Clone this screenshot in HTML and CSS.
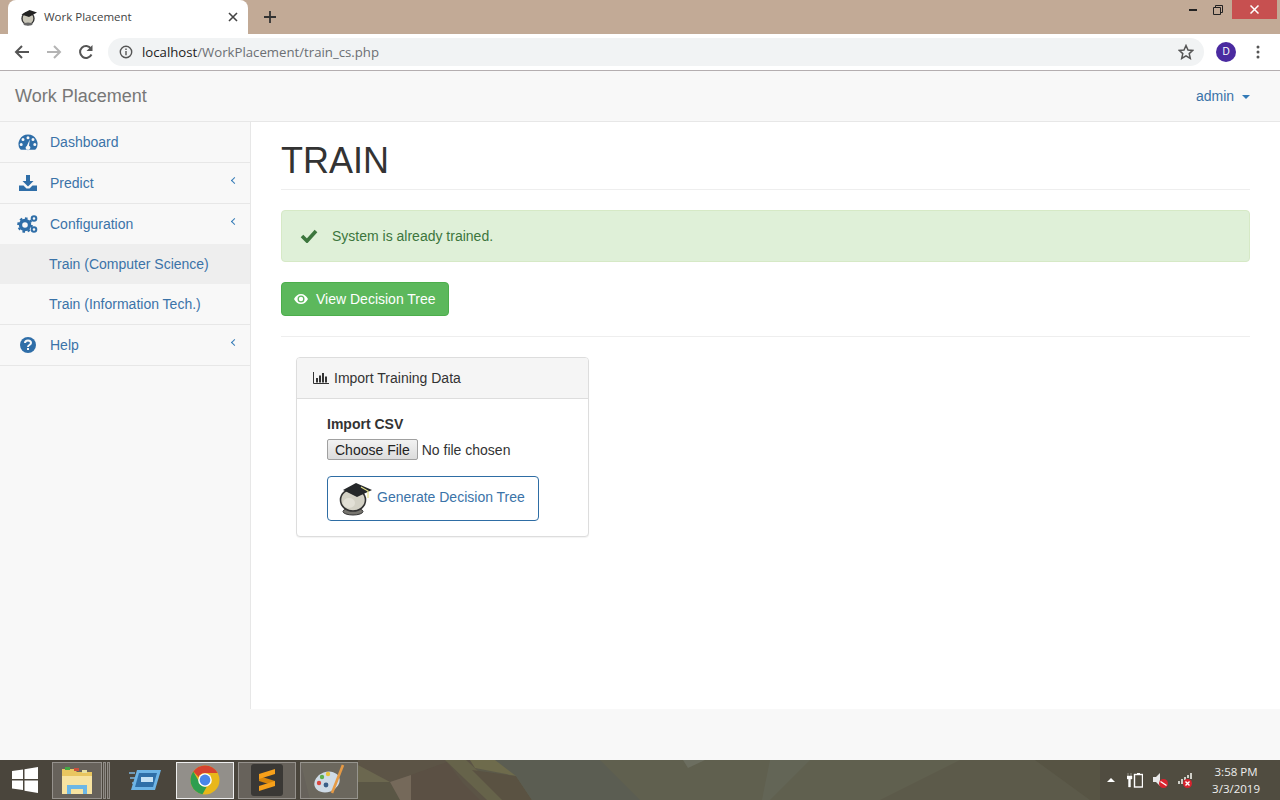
FILE: index.html
```html
<!DOCTYPE html>
<html lang="en">
<head>
    <meta charset="UTF-8">
    <meta name="viewport" content="width=device-width, initial-scale=1.0">
    <title>Work Placement</title>
    <link rel="stylesheet" href="styles.css">
</head>
<body>

<!-- browser window: tabs -->
<div class="tabstrip">
    <div class="tab">
        <svg class="tab-icon" width="18" height="18" viewBox="0 0 18 18">
            <ellipse cx="8" cy="10.5" rx="6" ry="6.2" fill="#c9c6b8" stroke="#333" stroke-width="1.4"/>
            <ellipse cx="8" cy="16" rx="4.5" ry="1.5" fill="#666"/>
            <polygon points="1.5,6.5 9.5,2 17,4.5 9,9" fill="#222"/>
        </svg>
        <span class="tab-title">Work Placement</span>
        <svg class="tab-close" width="10" height="10" viewBox="0 0 10 10"><path d="M1 1l8 8M9 1l-8 8" stroke="#444" stroke-width="1.6"/></svg>
    </div>
    <svg class="new-tab" width="12" height="12" viewBox="0 0 12 12"><path d="M6 0v12M0 6h12" stroke="#333" stroke-width="1.8"/></svg>
    <div class="window-btns">
        <svg width="8" height="2" viewBox="0 0 8 2"><rect width="8" height="2" fill="#222"/></svg>
        <svg class="win-restore" width="10" height="10" viewBox="0 0 10 10"><path d="M.5 2.5h7v7h-7zM2.5 2.5v-2h7v7h-2" fill="none" stroke="#222"/></svg>
        <div class="win-close"><svg width="9" height="9" viewBox="0 0 9 9"><path d="M.5.5l8 8M8.5.5l-8 8" stroke="#fff" stroke-width="1.5"/></svg></div>
    </div>
</div>

<!-- browser window: address bar -->
<div class="toolbar">
    <svg class="tool-btn" width="16" height="16" viewBox="0 0 16 16"><path d="M15 8H2M8 2L2 8l6 6" fill="none" stroke="#555" stroke-width="2"/></svg>
    <svg class="tool-btn" width="16" height="16" viewBox="0 0 16 16"><path d="M1 8h13M8 2l6 6-6 6" fill="none" stroke="#b4b4b4" stroke-width="2"/></svg>
    <svg class="tool-reload" width="16" height="16" viewBox="0 0 16 16"><path d="M13.5 10.5A6 6 0 1 1 13 4.5" fill="none" stroke="#555" stroke-width="2"/><polygon points="14.5,1 14.5,7 8.5,7" fill="#555"/></svg>
    <div class="omnibox">
        <svg width="14" height="14" viewBox="0 0 14 14"><circle cx="7" cy="7" r="5.7" fill="none" stroke="#555" stroke-width="1.4"/><path d="M7 6v4.2M7 3.6v1.4" stroke="#555" stroke-width="1.4"/></svg>
        <span class="url"><span class="url-host">localhost</span>/WorkPlacement/train_cs.php</span>
        <svg class="star" width="16" height="16" viewBox="0 0 16 16"><polygon points="8,1.5 10,6 14.8,6.4 11.2,9.6 12.3,14.4 8,11.8 3.7,14.4 4.8,9.6 1.2,6.4 6,6" fill="none" stroke="#555" stroke-width="1.5"/></svg>
    </div>
    <div class="avatar">D</div>
    <svg class="kebab" width="4" height="14" viewBox="0 0 4 14"><circle cx="2" cy="2" r="1.5" fill="#555"/><circle cx="2" cy="7" r="1.5" fill="#555"/><circle cx="2" cy="12" r="1.5" fill="#555"/></svg>
</div>

<!-- app -->
<nav class="navbar">
    <a class="brand">Work Placement</a>
    <a class="user-menu">admin <span class="caret"></span></a>
</nav>

<div class="wrapper">
    <aside class="sidebar">
        <ul class="side-nav">
            <li><a>
                <svg class="side-icon" width="20" height="18" viewBox="0 0 20 18"><path fill-rule="evenodd" d="M10 1.5a9.5 9.5 0 0 0-8 14.6c.3.5.7.7 1.200.7h13.600c.5 0 .9-.2 1.200-.7A9.500 9.500 0 0 0 10 1.500zM10 3.200a1.500 1.500 0 1 1 0 3 1.500 1.500 0 0 1 0-3zM5 5a1.500 1.500 0 1 1 0 3 1.500 1.500 0 0 1 0-3zM15 5a1.500 1.500 0 1 1 0 3 1.500 1.500 0 0 1 0-3zM3.200 10a1.500 1.500 0 1 1 0 3 1.500 1.500 0 0 1 0-3zM16.800 10a1.500 1.500 0 1 1 0 3 1.500 1.500 0 0 1 0-3zM11.800 6.500l-.8 6.300a2.200 2.200 0 1 1-2.200.1z" fill="#2f6ea8"/></svg>
                Dashboard</a></li>
            <li><a>
                <svg class="side-icon" width="20" height="18" viewBox="0 0 20 18"><path d="M8 1h4v6h3.500L10 12.500 4.500 7H8z" fill="#2f6ea8"/><path d="M1 11.500h4.500L8.500 14.500h3l3-3H19V17H1z" fill="#2f6ea8"/></svg>
                Predict<span class="chevron"></span></a></li>
            <li class="open"><a>
                <svg class="side-icon" width="22" height="20" viewBox="0 0 22 20"><circle cx="8" cy="11" r="4.500" fill="none" stroke="#2f6ea8" stroke-width="3.400"/><circle cx="8" cy="11" r="6.800" fill="none" stroke="#2f6ea8" stroke-width="2" stroke-dasharray="2.600 2.700"/><circle cx="17" cy="4.500" r="2.300" fill="none" stroke="#2f6ea8" stroke-width="2"/><circle cx="17" cy="15.500" r="2.300" fill="none" stroke="#2f6ea8" stroke-width="2"/></svg>
                Configuration<span class="chevron"></span></a></li>
            <li class="sub-item active"><a>Train (Computer Science)</a></li>
            <li class="sub-item last"><a>Train (Information Tech.)</a></li>
            <li><a>
                <svg class="side-icon" width="20" height="18" viewBox="0 0 20 18"><circle cx="10" cy="9" r="8" fill="#2f6ea8"/><path d="M7 7c0-1.700 1.300-2.600 3-2.600s3 1 3 2.500c0 2.200-3 2-3 4" fill="none" stroke="#f8f8f8" stroke-width="2"/><rect x="9" y="12" width="2" height="2" fill="#f8f8f8"/></svg>
                Help<span class="chevron"></span></a></li>
        </ul>
    </aside>

    <main class="content">
        <h1 class="page-header">TRAIN</h1>

        <div class="alert">
            <svg width="18" height="14" viewBox="0 0 18 14"><path d="M2 7l5 5 9-10" fill="none" stroke="#3c763d" stroke-width="3.600"/></svg>
            <span>System is already trained.</span>
        </div>

        <a class="btn-success">
            <svg width="14" height="10" viewBox="0 0 14 10"><path fill-rule="evenodd" d="M7 0c3 0 5.500 2 7 5-1.500 3-4 5-7 5S1.500 8 0 5c1.500-3 4-5 7-5zM7 1.500a3.500 3.500 0 1 0 0 7 3.500 3.500 0 0 0 0-7z" fill="#fff"/><circle cx="7" cy="5" r="2.200" fill="#fff"/></svg>
            View Decision Tree
        </a>

        <hr class="divider">

        <section class="panel">
            <div class="panel-heading">
                <svg width="16" height="12" viewBox="0 0 16 12"><path d="M.5 0v11.500H16" fill="none" stroke="#333"/><path d="M3 6h2v4.500H3zM6 3.500h2v7H6zM9 1h2v9.500H9zM12 4.500h2v6h-2z" fill="#333"/></svg>
                Import Training Data
            </div>
            <div class="panel-body">
                <label class="field-label" for="csv">Import CSV</label>
                <input class="file-input" type="file" id="csv">
                <button class="btn-generate">
                    <svg class="btn-generate-icon" width="36" height="34" viewBox="0 0 36 34">
                        <ellipse cx="14" cy="29.500" rx="10" ry="3.500" fill="#77756f" stroke="#333"/>
                        <ellipse cx="14" cy="18" rx="12.500" ry="11" fill="#d3d1c5" stroke="#333" stroke-width="1.600"/>
                        <ellipse cx="10" cy="21" rx="6" ry="5" fill="#e2e0d6"/>
                        <polygon points="4,8 17,1 33,8 18,15" fill="#25282a"/>
                        <path d="M22 5l7 4v7" fill="none" stroke="#e4e08a" stroke-width="1.200"/>
                    </svg>
                    Generate Decision Tree
                </button>
            </div>
        </section>
    </main>
</div>

<div class="footer-strip"></div>

<!-- windows taskbar -->
<div class="taskbar">
    <svg class="taskbar-bg" width="1280" height="40" viewBox="0 0 1280 40">
        <rect width="1280" height="40" fill="#5c5a4a"/>
        <polygon points="495,0 960,0 880,40 530,40" fill="#60604f"/>
        <rect width="358" height="40" fill="#4a453c"/>
        <polygon points="300,0 358,0 358,40 310,40" fill="#4f4a3f"/>
        <polygon points="358,0 470,0 500,40 358,40" fill="#5c5446"/>
        <polygon points="358,5 390,22 358,22" fill="#6b674f"/>
        <polygon points="358,22 390,22 400,40 358,40" fill="#5a5645"/>
        <polygon points="390,22 411,15 411,40 400,40" fill="#75695a"/>
        <polygon points="411,15 447,2 462,22 480,40 411,40" fill="#5b5044"/>
        <polygon points="445,0 466,0 510,40 487,40" fill="#66634a"/>
        <polygon points="470,0 510,0 516,16 475,8" fill="#6e6b4c"/>
        <polygon points="472,10 516,16 532,40 502,40" fill="#5a5242"/>
        <polygon points="495,0 600,0 640,40 532,40 516,16" fill="#5b5d52"/>
        <polygon points="683,0 705,0 688,8" fill="#6c6e60"/>
        <polygon points="770,0 810,0 770,40 762,40" fill="#636556"/>
        <polygon points="1035,0 1280,0 1280,40 1090,40" fill="#575444"/>
        <rect x="1100" width="180" height="40" fill="#504c40"/>
    </svg>
    <svg class="start" width="26" height="26" viewBox="0 0 26 26"><path d="M0 4l11-1.500V12H0zM12.500 2.300L26 0v12H12.500zM0 13.500h11V23L0 21.500zM12.500 13.500H26V26l-13.500-2.200z" fill="#fff"/></svg>
    <div class="task-btn task-folder">
        <svg width="34" height="32" viewBox="0 0 34 32">
            <path d="M2 5h12l3 3h15v22H2z" fill="#e9c65f"/>
            <rect x="5" y="3" width="5" height="3" fill="#45a845"/>
            <rect x="14" y="4" width="5" height="3" fill="#c9503c"/>
            <rect x="22" y="6" width="5" height="3" fill="#e8e0a0"/>
            <path d="M2 12h30v18H2z" fill="#f7e3a1"/>
            <path d="M7 30V21h20v9h-4v-5H11v5z" fill="#6cb7e6"/>
        </svg>
    </div>
    <div class="task-sliver"></div>
    <div class="task-sliver"></div>
    <div class="task-plain">
        <svg width="34" height="24" viewBox="0 0 34 24"><path d="M1 5h6M2 10h5M4 15h2" stroke="#7fb5dc" stroke-width="1.400"/><polygon points="9,2 33,2 27,22 3,22" fill="#6db4e6"/><polygon points="11,5 29,5 25,19 7,19" fill="#2f6fa8"/><rect x="13" y="9" width="12" height="5" fill="#c6e2f5"/></svg>
    </div>
    <div class="task-btn task-active">
        <svg width="30" height="30" viewBox="0 0 30 30">
            <circle cx="15" cy="15" r="14.500" fill="#e8b71a"/>
            <path d="M15 .5A14.500 14.500 0 0 1 27.600 8H15a7 7 0 0 0-6.400 4L3.300 6.500A14.500 14.500 0 0 1 15 .5z" fill="#d6432f"/>
            <path d="M3.300 6.500L8.700 16a7 7 0 0 0 8 5.800l-4.200 7.500A14.500 14.500 0 0 1 3.300 6.500z" fill="#2f9e4f"/>
            <circle cx="15" cy="15" r="6.800" fill="#fff"/>
            <circle cx="15" cy="15" r="5.400" fill="#4a86e8"/>
        </svg>
    </div>
    <div class="task-btn">
        <div class="sublime"><svg width="18" height="22" viewBox="0 0 18 22"><polygon points="1,7 17,12 17,17 1,12" fill="#d9860c"/><polygon points="17,0 17,5 1,10 1,5" fill="#f7a01a"/><polygon points="17,12 17,17 1,22 1,17" fill="#f7a01a"/></svg></div>
    </div>
    <div class="task-btn">
        <svg width="32" height="32" viewBox="0 0 32 32">
            <ellipse cx="14" cy="18" rx="13" ry="10" fill="#cfdbe6" transform="rotate(-20 14 18)"/>
            <circle cx="6" cy="19" r="2.200" fill="#d9473f"/>
            <circle cx="9" cy="13" r="2.200" fill="#5cae4c"/>
            <circle cx="15" cy="10" r="2.200" fill="#e8c23a"/>
            <circle cx="13" cy="21" r="2.400" fill="#3a5f88"/>
            <path d="M30 1L19 29" stroke="#e59a45" stroke-width="2.600"/>
        </svg>
    </div>
    <div class="tray">
        <span class="tray-caret"></span>
        <svg width="16" height="16" viewBox="0 0 16 16"><path d="M1 1v3M4 1v3M0 4h5v3H3.500v8h-2V7H0z" fill="#fff" stroke="#fff" stroke-width=".4"/><rect x="7.500" y="2.500" width="8" height="12.500" fill="none" stroke="#fff" stroke-width="1.400"/><rect x="10" y="1" width="3" height="1.500" fill="#fff"/></svg>
        <svg width="16" height="16" viewBox="0 0 16 16"><polygon points="1,5 4,5 8,1 8,14 4,10 1,10" fill="#e8e8e8"/><circle cx="11.500" cy="11.500" r="4.500" fill="#d9232e"/><path d="M8.500 9.500l6 4" stroke="#fff" stroke-width="1.400"/></svg>
        <svg width="16" height="16" viewBox="0 0 16 16"><path d="M1 9h2v3H1zM4 7h2v5H4zM7 5h2v3H7zM10 3h2v3h-2zM13 1h2v6h-2z" fill="#cfcfc8"/><circle cx="10.500" cy="11.500" r="4.500" fill="#d9232e"/><path d="M8.500 9.500l4 4M12.500 9.500l-4 4" stroke="#fff" stroke-width="1.400"/></svg>
        <div class="clock"><div>3:58 PM</div><div>3/3/2019</div></div>
    </div>
</div>

</body>
</html>
```

FILE: styles.css
```css
body {
    margin: 0;
    height: 800px;
    overflow: hidden;
    display: flex;
    flex-direction: column;
    font-family: "Liberation Sans", Arial, sans-serif;
    font-size: 14px;
    color: #333;
    background-color: #fff;
}

/* browser chrome */
.tabstrip {
    height: 34px;
    flex: none;
    display: flex;
    align-items: center;
    background-color: #c2aa96;
}

.tab {
    width: 240px;
    height: 34px;
    margin-left: 8px;
    padding: 0 10px 0 12px;
    box-sizing: border-box;
    display: flex;
    align-items: center;
    background-color: #fff;
    border-radius: 8px 8px 0 0;
}

.tab-icon {
    margin-right: 6px;
    flex: none;
}

.tab-title {
    flex: 1;
    padding-bottom: 1px;
    font-family: "Open Sans", sans-serif;
    font-size: 11.500px;
    color: #444;
}

.new-tab {
    margin-left: 16px;
}

.window-btns {
    margin-left: auto;
    align-self: flex-start;
    display: flex;
    align-items: center;
    height: 19px;
}

.win-restore {
    margin: 0 9px 0 16px;
}

.win-close {
    width: 45px;
    height: 19px;
    margin-right: 3px;
    margin-left: 0;
    display: flex;
    align-items: center;
    justify-content: center;
    background-color: #c75050;
}

.toolbar {
    height: 36px;
    flex: none;
    display: flex;
    align-items: center;
    padding-left: 14px;
    background-color: #fff;
    border-bottom: 1px solid #b4aeb0;
}

.tool-btn {
    margin-right: 16px;
}

.tool-reload {
    margin-right: 14px;
}

.omnibox {
    width: 1096px;
    height: 28px;
    padding: 0 10px 0 11px;
    box-sizing: border-box;
    display: flex;
    align-items: center;
    background-color: #f1f3f4;
    border-radius: 14px;
}

.url {
    margin-left: 9px;
    font-family: "Open Sans", sans-serif;
    font-size: 13.200px;
    color: #6b6f73;
}

.url-host {
    color: #222;
}

.star {
    margin-left: auto;
}

.avatar {
    width: 20px;
    height: 20px;
    margin-left: 12px;
    border-radius: 50%;
    background-color: #4a2aa0;
    color: #fff;
    font-size: 10px;
    line-height: 20px;
    text-align: center;
}

.kebab {
    margin-left: 20px;
}

/* navbar */
.navbar {
    height: 50px;
    flex: none;
    display: flex;
    align-items: center;
    justify-content: space-between;
    padding: 0 30px 0 15px;
    background-color: #f8f8f8;
    border-bottom: 1px solid #e7e7e7;
}

.brand {
    font-size: 18px;
    color: #777;
}

.user-menu {
    color: #3b73a8;
}

.caret {
    display: inline-block;
    margin-left: 4px;
    vertical-align: middle;
    border-top: 4px solid #337ab7;
    border-left: 4px solid transparent;
    border-right: 4px solid transparent;
}

/* layout */
.wrapper {
    height: 587px;
    flex: none;
    display: flex;
}

.sidebar {
    width: 250px;
    flex: none;
    background-color: #f8f8f8;
    border-right: 1px solid #e7e7e7;
}

.side-nav {
    list-style: none;
    margin: 0;
    padding: 0;
}

.side-nav li {
    border-bottom: 1px solid #e7e7e7;
}

.side-nav a {
    position: relative;
    height: 40px;
    display: flex;
    align-items: center;
    padding-left: 17px;
    color: #3b73a8;
}

.side-icon {
    width: 22px;
    margin-right: 11px;
    flex: none;
}

.chevron {
    position: absolute;
    right: 13px;
    top: 15px;
    width: 4px;
    height: 4px;
    border-left: 1px solid #337ab7;
    border-bottom: 1px solid #337ab7;
    transform: rotate(45deg);
}

.side-nav .open,
.side-nav .sub-item {
    border-bottom: none;
}

.side-nav .sub-item a {
    padding-left: 49px;
}

.side-nav .sub-item.last {
    border-bottom: 1px solid #e7e7e7;
}

.side-nav .active {
    background-color: #eee;
}

/* content */
.content {
    flex: 1;
    padding: 0 30px;
    background-color: #fff;
}

.page-header {
    margin: 19px 0 20px;
    padding-bottom: 8px;
    font-size: 36px;
    font-weight: 500;
    line-height: 40px;
    color: #333;
    border-bottom: 1px solid #eee;
}

.alert {
    height: 52px;
    box-sizing: border-box;
    display: flex;
    align-items: center;
    gap: 14px;
    padding-left: 18px;
    margin-bottom: 20px;
    color: #3c763d;
    background-color: #dff0d8;
    border: 1px solid #d6e9c6;
    border-radius: 4px;
}

.btn-success {
    width: 168px;
    height: 34px;
    box-sizing: border-box;
    display: flex;
    align-items: center;
    gap: 8px;
    padding-left: 12px;
    color: #fff;
    background-color: #5cb85c;
    border: 1px solid #4cae4c;
    border-radius: 4px;
}

.divider {
    margin: 20px 0;
    border: 0;
    border-top: 1px solid #eee;
}

.panel {
    width: 293px;
    height: 180px;
    margin-left: 15px;
    box-sizing: border-box;
    background-color: #fff;
    border: 1px solid #ddd;
    border-radius: 4px;
    box-shadow: 0 1px 1px rgba(0, 0, 0, .05);
}

.panel-heading {
    height: 41px;
    box-sizing: border-box;
    display: flex;
    align-items: center;
    gap: 5px;
    padding-left: 16px;
    background-color: #f5f5f5;
    border-bottom: 1px solid #ddd;
    border-radius: 3px 3px 0 0;
}

.panel-body {
    padding: 17px 30px 0;
}

.field-label {
    display: block;
    margin-bottom: 7px;
    font-weight: bold;
}

.file-input {
    display: block;
    font-family: "Liberation Sans", Arial, sans-serif;
    font-size: 14px;
    color: #333;
}

.file-input::file-selector-button {
    height: 21px;
    padding: 0 7px;
    margin-right: 4px;
    font-family: inherit;
    font-size: 14px;
    color: #222;
    background: linear-gradient(#f2f2f2, #dcdcdc);
    border: 1px solid #a0a0a0;
    border-radius: 2px;
}

.btn-generate {
    width: 212px;
    height: 45px;
    margin-top: 16px;
    padding: 0 0 3px 11px;
    display: flex;
    align-items: center;
    gap: 2px;
    font-family: inherit;
    font-size: 14px;
    color: #3b73a8;
    background-color: #fff;
    border: 1px solid #2e6da4;
    border-radius: 4px;
}

.btn-generate-icon {
    margin-top: 3px;
}

.footer-strip {
    height: 51px;
    flex: none;
    background-color: #f8f8f8;
}

/* windows taskbar */
.taskbar {
    position: relative;
    height: 40px;
    flex: none;
    display: flex;
    align-items: center;
    background-color: #5a5748;
}

.taskbar-bg {
    position: absolute;
    left: 0;
    top: 0;
}

.start {
    position: relative;
    margin: 0 14px 0 12px;
}

.task-btn {
    position: relative;
    width: 58px;
    height: 37px;
    margin-right: 4px;
    box-sizing: border-box;
    display: flex;
    align-items: center;
    justify-content: center;
    background-color: rgba(255, 255, 255, .16);
    border: 1px solid rgba(255, 255, 255, .3);
}

.task-folder {
    width: 50px;
    margin-right: 1px;
}

.task-sliver {
    position: relative;
    width: 3px;
    height: 37px;
    margin-right: 1px;
    box-sizing: border-box;
    background-color: rgba(255, 255, 255, .12);
    border: 1px solid rgba(255, 255, 255, .3);
}

.task-plain {
    position: relative;
    width: 40px;
    margin: 0 11px 0 14px;
    display: flex;
    justify-content: center;
}

.task-active {
    background-color: rgba(255, 255, 255, .4);
    border-color: #eee;
}

.sublime {
    width: 32px;
    height: 32px;
    display: flex;
    align-items: center;
    justify-content: center;
    background-color: #3a3835;
    border-radius: 3px;
}

.tray {
    position: relative;
    margin-left: auto;
    display: flex;
    align-items: center;
    gap: 9px;
    padding-right: 20px;
}

.tray-caret {
    margin-right: 3px;
    border-bottom: 4px solid #fff;
    border-left: 4px solid transparent;
    border-right: 4px solid transparent;
}

.clock {
    margin-left: 10px;
    font-family: "Open Sans", sans-serif;
    font-size: 11.500px;
    line-height: 17px;
    text-align: center;
    color: #eee;
}
```
